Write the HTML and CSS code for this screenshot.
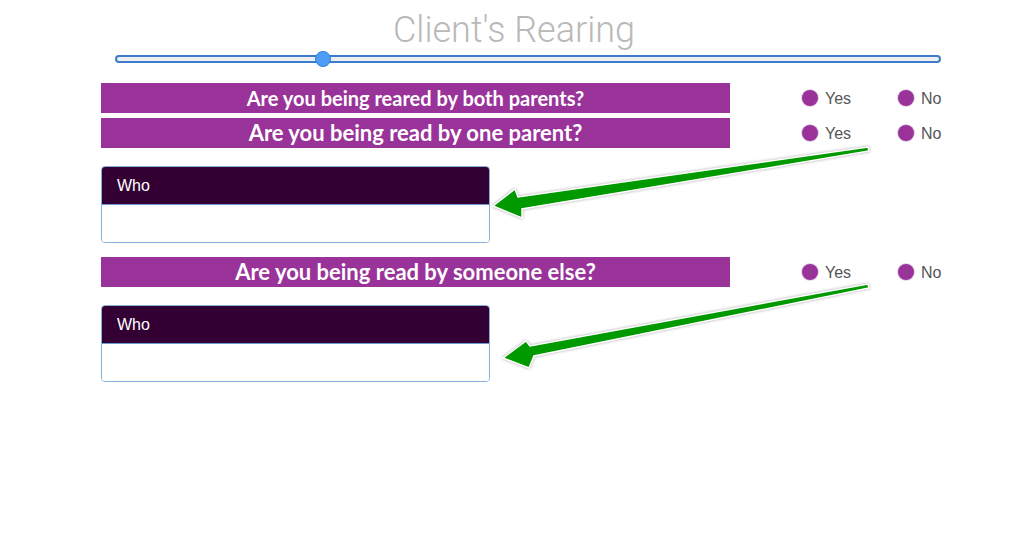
FILE: index.html
```html
<!DOCTYPE html>
<html>
  <head>
    <meta charset="utf-8" />
    <title>Client's Rearing</title>
    <meta name="viewport" content="width=device-width, initial-scale=1" />
    <link rel="stylesheet" href="styles.css">
  </head>

  <body>
    <div class="page">
      <h1 class="title">Client's Rearing</h1>

      <div class="slider">
        <div class="slider-track"><span class="slider-thumb"></span></div>
      </div>

      <div class="question-row first">
        <div class="question">Are you being reared by both parents?</div>
        <div class="choices">
          <label class="choice yes"><span class="dot"></span>Yes</label>
          <label class="choice"><span class="dot"></span>No</label>
        </div>
      </div>

      <div class="question-row">
        <div class="question large">Are you being read by one parent?</div>
        <div class="choices">
          <label class="choice yes"><span class="dot"></span>Yes</label>
          <label class="choice"><span class="dot"></span>No</label>
        </div>
      </div>

      <div class="who-box">
        <div class="who-head">Who</div>
        <div class="who-body"></div>
      </div>

      <div class="question-row after-box">
        <div class="question large">Are you being read by someone else?</div>
        <div class="choices">
          <label class="choice yes"><span class="dot"></span>Yes</label>
          <label class="choice"><span class="dot"></span>No</label>
        </div>
      </div>

      <div class="who-box">
        <div class="who-head">Who</div>
        <div class="who-body"></div>
      </div>
    </div>

    <!-- callout arrows drawn over the form -->
    <svg class="arrows" width="1028" height="545" viewBox="0 0 1028 545">
      <polygon class="arrow" points="493,206 515,189 518,197 868,147 869,151 522,209 522,218" />
      <polygon class="arrow" points="503,358 526,341 530,346 868,284 869,288 534,356 529,368" />
    </svg>
  </body>
</html>
```

FILE: styles.css
```css
* {
  margin: 0;
  padding: 0;
  box-sizing: border-box;
}

body {
  font-family: "Liberation Sans", Arial, sans-serif;
  background-color: #ffffff;
  position: relative;
  width: 1028px;
  height: 545px;
  overflow: hidden;
}

.title {
  font-family: Roboto, "Liberation Sans", sans-serif;
  font-weight: 300;
  font-size: 36px;
  line-height: 42px;
  padding-top: 9px;
  color: #b9b9b9;
  text-align: center;
}

.slider {
  margin: 4px 87px 0 115px;
}

.slider-track {
  position: relative;
  height: 8px;
  border: 2px solid #3b7dcc;
  border-radius: 4px;
  background-color: #eeeeee;
}

.slider-thumb {
  position: absolute;
  left: 198px;
  top: -6px;
  width: 16px;
  height: 16px;
  border-radius: 50%;
  background-color: #4d9cf8;
  border: 1px solid #2f7fd6;
}

.question-row {
  display: flex;
  align-items: center;
  margin: 5px 0 0 101px;
}

.question-row.first {
  margin-top: 20px;
}

.question-row.after-box {
  margin-top: 14px;
}

.question {
  width: 629px;
  height: 30px;
  line-height: 30px;
  background-color: #993399;
  color: #ffffff;
  font-family: Lato, "Open Sans", sans-serif;
  font-weight: 700;
  font-size: 20px;
  text-align: center;
}

.question.large {
  font-size: 22px;
}

.choices {
  display: flex;
  margin-left: 72px;
}

.choice {
  display: flex;
  align-items: center;
  gap: 7px;
  font-size: 16px;
  line-height: 18px;
  padding-top: 2px;
  color: #555555;
}

.choice.yes {
  width: 96px;
}

.dot {
  width: 16px;
  height: 16px;
  margin-top: -2px;
  border-radius: 50%;
  background-color: #993399;
  box-shadow: 0 0 0 1px #e2d2e2;
}

.who-box {
  width: 389px;
  margin: 18px 0 0 101px;
  border: 1px solid #86b0dc;
  border-radius: 4px;
  overflow: hidden;
}

.who-head {
  height: 38px;
  line-height: 37px;
  padding-left: 15px;
  background-color: #330033;
  border-bottom: 1px solid #6b9bd0;
  color: #ffffff;
  font-size: 16px;
}

.who-body {
  height: 37px;
  background-color: #ffffff;
}

.arrows {
  position: absolute;
  top: 0;
  left: 0;
  pointer-events: none;
}

.arrow {
  fill: #009900;
  stroke: #ffffff;
  stroke-width: 1.5;
  stroke-linejoin: miter;
  filter: drop-shadow(0 0 1.5px rgba(0, 0, 0, 0.35));
}
```
